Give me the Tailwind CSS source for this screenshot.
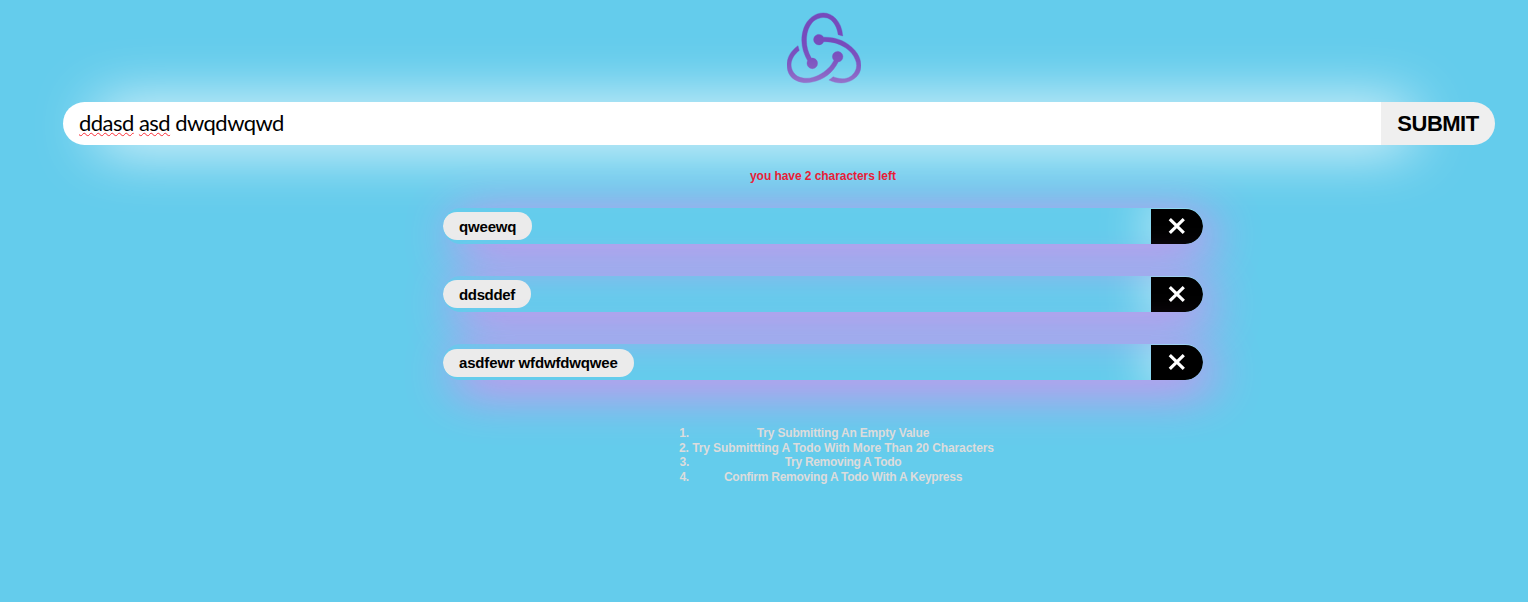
<!DOCTYPE html>
<html lang="en">
<head>
<meta charset="utf-8">
<title>Todos</title>
<script src="https://cdn.jsdelivr.net/npm/@tailwindcss/browser@4"></script>
</head>
<body class="bg-[#64ccec] h-[602px] w-full overflow-hidden font-['Liberation_Sans',sans-serif] font-bold text-black">
<main class="w-full flex flex-col pt-[11px] pl-[63px]">
  <svg class="w-[74px] h-[74px] ml-[724px] mb-px" viewBox="0 0 24 24" fill="#764abc" stroke="#764abc" stroke-width="0.12"><path d="M16.634 16.504c.87-.075 1.543-.84 1.5-1.754-.047-.914-.796-1.648-1.709-1.648h-.061a1.71 1.71 0 00-1.648 1.769c.03.479.226.869.494 1.153-1.048 2.038-2.621 3.535-5.005 4.795-1.603.838-3.296 1.154-4.944.93-1.378-.195-2.456-.81-3.116-1.799-.988-1.499-1.078-3.116-.255-4.734.601-1.166 1.499-2.023 2.099-2.443a9.96 9.96 0 01-.42-1.543C-.868 14.408-.416 18.752.932 20.805c1.004 1.498 3.057 2.456 5.304 2.456.599 0 1.23-.044 1.843-.194 3.897-.749 6.848-3.086 8.541-6.532l.014-.031zM21.968 12.72c-2.321-2.727-5.738-4.225-9.634-4.225h-.51c-.253-.554-.837-.899-1.498-.899h-.045c-.943 0-1.678.81-1.647 1.753.03.898.794 1.648 1.708 1.648h.074a1.69 1.69 0 001.499-1.049h.555c2.309 0 4.495.674 6.488 1.992 1.527 1.004 2.622 2.322 3.236 3.896.538 1.288.509 2.547-.045 3.597-.855 1.647-2.294 2.517-4.196 2.517-1.199 0-2.367-.375-2.967-.644-.36.298-.96.793-1.394 1.093 1.318.598 2.652.943 3.94.943 2.922 0 5.094-1.647 5.919-3.236.898-1.798.824-4.824-1.47-7.416zM6.49 17.042c.03.899.793 1.648 1.708 1.648h.06a1.688 1.688 0 001.648-1.768c0-.9-.779-1.647-1.693-1.647h-.06c-.06 0-.149 0-.226.029-1.243-2.098-1.768-4.347-1.572-6.772.12-1.828.72-3.417 1.797-4.735.899-1.124 2.593-1.68 3.746-1.708 3.236-.061 4.585 3.971 4.689 5.574l1.498.45c-.345-4.914-3.4-7.492-6.322-7.492-2.742 0-5.273 1.993-6.293 4.915-1.393 3.896-.479 7.641 1.229 10.638-.149.195-.239.54-.209.868z"/></svg>

  <form class="mt-4 flex h-[43px] w-[1432px]">
    <div class="w-[1318px] shrink-0 bg-white rounded-l-full pl-4 pb-[3px] flex items-center font-['Lato',sans-serif] font-normal text-[22px] tracking-[-0.53px] shadow-[30px_2px_60px_0_#ffffff]"><span class="whitespace-pre"><span class="underline decoration-wavy decoration-red-500 decoration-1 underline-offset-1 [text-decoration-skip-ink:none]">ddasd</span> <span class="underline decoration-wavy decoration-red-500 decoration-1 underline-offset-1 [text-decoration-skip-ink:none]">asd</span> dwqdwqwd</span></div>
    <button type="button" class="relative w-[114px] rounded-r-full bg-[#efefef] font-bold text-[22px] tracking-[-0.5px]">SUBMIT</button>
  </form>

  <p class="mt-[23px] h-4 leading-4 ml-[687px] text-[12px] tracking-[-0.06px] text-[#e8192f]">you have 2 characters left</p>

  <ul class="mt-6 ml-[380px] w-[760px] flex flex-col gap-8 text-[15px]">
    <li class="h-9 rounded-full overflow-hidden flex items-center justify-between shadow-[10px_10px_50px_0_#ee82ee]">
      <span class="h-7 w-[89px] rounded-full bg-[#ebebeb] px-4 leading-[29px] tracking-[-0.17px]">qweewq</span>
      <button type="button" class="h-[35px] w-[52px] bg-black rounded-r-full shadow-[0_0_50px_0_#ffffff] flex items-center justify-center"><svg class="size-[18px]" viewBox="0 0 18 18" stroke="white" stroke-width="3.2"><path d="M1.8 2.2l14 13.6M15.8 2.2l-14 13.6"/></svg></button>
    </li>
    <li class="h-9 rounded-full overflow-hidden flex items-center justify-between shadow-[10px_10px_50px_0_#ee82ee]">
      <span class="h-7 w-[88px] rounded-full bg-[#ebebeb] px-4 leading-[29px] tracking-[-0.35px]">ddsddef</span>
      <button type="button" class="h-[35px] w-[52px] bg-black rounded-r-full shadow-[0_0_50px_0_#ffffff] flex items-center justify-center"><svg class="size-[18px]" viewBox="0 0 18 18" stroke="white" stroke-width="3.2"><path d="M1.8 2.2l14 13.6M15.8 2.2l-14 13.6"/></svg></button>
    </li>
    <li class="h-9 rounded-full overflow-hidden flex items-center justify-between shadow-[10px_10px_50px_0_#ee82ee]">
      <span class="mt-px h-7 w-[191px] rounded-full bg-[#ebebeb] px-4 leading-[27px] tracking-[-0.16px] whitespace-nowrap">asdfewr wfdwfdwqwee</span>
      <button type="button" class="h-[35px] w-[52px] bg-black rounded-r-full shadow-[0_0_50px_0_#ffffff] flex items-center justify-center"><svg class="size-[18px]" viewBox="0 0 18 18" stroke="white" stroke-width="3.2"><path d="M1.8 2.2l14 13.6M15.8 2.2l-14 13.6"/></svg></button>
    </li>
  </ul>

  <ol class="relative mt-[46px] w-[302px] ml-[629px] text-center text-[12px] leading-[14.67px] tracking-[-0.1px] text-[#dcdcdc] list-decimal whitespace-nowrap">
    <li class="tracking-[-0.18px]">Try Submitting An Empty Value</li>
    <li>Try Submittting A Todo With More Than 20 Characters</li>
    <li class="tracking-[-0.3px]">Try Removing A Todo</li>
    <li class="tracking-[-0.25px]">Confirm Removing A Todo With A Keypress</li>
  </ol>
</main>
</body>
</html>
